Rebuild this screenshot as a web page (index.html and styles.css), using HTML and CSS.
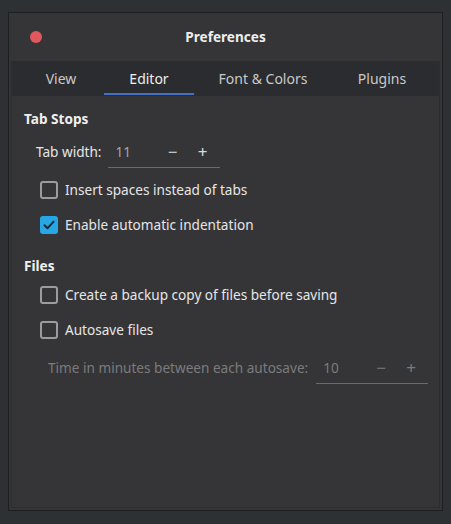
FILE: index.html
```html
<!DOCTYPE html>
<html>
<head>
<meta charset="utf-8">
<link rel="stylesheet" href="styles.css">
</head>
<body>
<div class="window">
  <div class="titlebar">
    <span class="close"></span>
    <span class="title">Preferences</span>
  </div>
  <div class="notebook">
    <div class="tabs">
      <div class="tab tab-view">View</div>
      <div class="tab tab-editor active">Editor</div>
      <div class="tab tab-font">Font &amp; Colors</div>
      <div class="tab tab-plugins">Plugins</div>
    </div>
    <div class="page">
      <div class="heading">Tab Stops</div>
      <div class="spin-row">
        <span class="spin-label">Tab width:</span>
        <div class="spin">
          <span class="spin-value">11</span>
          <span class="spin-btn">−</span>
          <span class="spin-btn">+</span>
        </div>
      </div>
      <label class="check-row"><span class="box"></span><span>Insert spaces instead of tabs</span></label>
      <label class="check-row"><span class="box checked"><svg width="14" height="14" viewBox="0 0 14 14"><path d="M2.5 7.2 L5.6 10.2 L11.6 3.6" fill="none" stroke="#1d2a33" stroke-width="2" stroke-linecap="round" stroke-linejoin="round"/></svg></span><span>Enable automatic indentation</span></label>
      <div class="heading heading-files">Files</div>
      <label class="check-row"><span class="box"></span><span>Create a backup copy of files before saving</span></label>
      <label class="check-row"><span class="box"></span><span>Autosave files</span></label>
      <div class="spin-row dim-row">
        <span class="spin-label dim">Time in minutes between each autosave:</span>
        <div class="spin spin-dim">
          <span class="spin-value">10</span>
          <span class="spin-btn">−</span>
          <span class="spin-btn">+</span>
        </div>
      </div>
    </div>
  </div>
</div>
</body>
</html>
```

FILE: styles.css
```css
* { box-sizing: border-box; }
html, body {
  margin: 0;
  padding: 0;
  background: #2e3134;
  width: 451px;
  height: 524px;
  overflow: hidden;
  font-family: "Noto Sans", "Open Sans", sans-serif;
  font-size: 13.6px;
  line-height: 20px;
  color: #e6e6e6;
}
.window {
  margin: 12px 0 0 8px;
  width: 435px;
  height: 499px;
  background: #353538;
  border: 1px solid #1d1e20;
  display: flex;
  flex-direction: column;
}
.titlebar {
  height: 48px;
  flex: none;
  position: relative;
  display: flex;
  align-items: center;
  justify-content: center;
}
.close {
  position: absolute;
  left: 21px;
  top: 18px;
  width: 12px;
  height: 12px;
  border-radius: 50%;
  background: #e0575e;
}
.title {
  font-weight: 700;
  font-size: 13.6px;
  color: #eeeeee;
}
.notebook {
  flex: 1;
  margin: 0 2px 2px 2px;
  border: 1px solid #2c2d30;
  border-top: none;
  display: flex;
  flex-direction: column;
}
.tabs {
  height: 35px;
  flex: none;
  background: #2b2c2f;
  display: grid;
  grid-template-columns: 92px 90px 138px 1fr;
  border-bottom: 1px solid #2a2b2d;
  font-size: 14px;
}
.tab {
  display: flex;
  align-items: center;
  justify-content: center;
  color: #c9c9c9;
  padding-top: 1px;
}
.tab-view { padding-left: 6px; }
.tab-plugins { padding-right: 7px; }
.tab.active {
  color: #eeeeee;
  box-shadow: inset 0 -2px 0 #4471c8;
}
.page {
  flex: 1;
  padding: 13px 0 0 12px;
  display: flex;
  flex-direction: column;
  align-items: flex-start;
}
.heading {
  font-weight: 700;
  color: #f0f0f0;
  height: 20px;
}
.heading-files { margin-top: 21px; }
.spin-row {
  display: flex;
  align-items: center;
  height: 32px;
  margin-top: 7px;
  padding-left: 12px;
}
.spin-label { margin-right: 6px; }
.spin {
  width: 112px;
  height: 32px;
  display: flex;
  align-items: center;
  border-bottom: 1px solid #6b6b6e;
  padding-left: 8px;
  padding-right: 2px;
}
.spin-value {
  flex: 1;
  color: #9fa6ad;
}
.spin-btn {
  width: 30px;
  text-align: center;
  font-size: 17px;
  color: #dcdcdc;
}
.check-row {
  display: flex;
  align-items: center;
  height: 20px;
  margin-left: 16px;
  margin-top: 15px;
}
.spin-row + .check-row { margin-top: 12px; }
.heading + .check-row { margin-top: 9px; }
.box {
  width: 18px;
  height: 18px;
  border: 2px solid #9c9c9e;
  border-radius: 3px;
  margin-right: 7px;
  display: flex;
  align-items: center;
  justify-content: center;
}
.box.checked {
  background: #27a6e6;
  border-color: #27a6e6;
}
.dim-row {
  margin-top: 12px;
  padding-left: 24px;
}
.dim { color: #7b7b7d; }
.spin-dim { width: 112px; height: 31px; padding-left: 7px; }
.spin-dim .spin-value { color: #7b7b7d; }
.spin-dim .spin-btn { color: #7b7b7d; }
.dim-row .spin-label { margin-right: 8px; }
```
